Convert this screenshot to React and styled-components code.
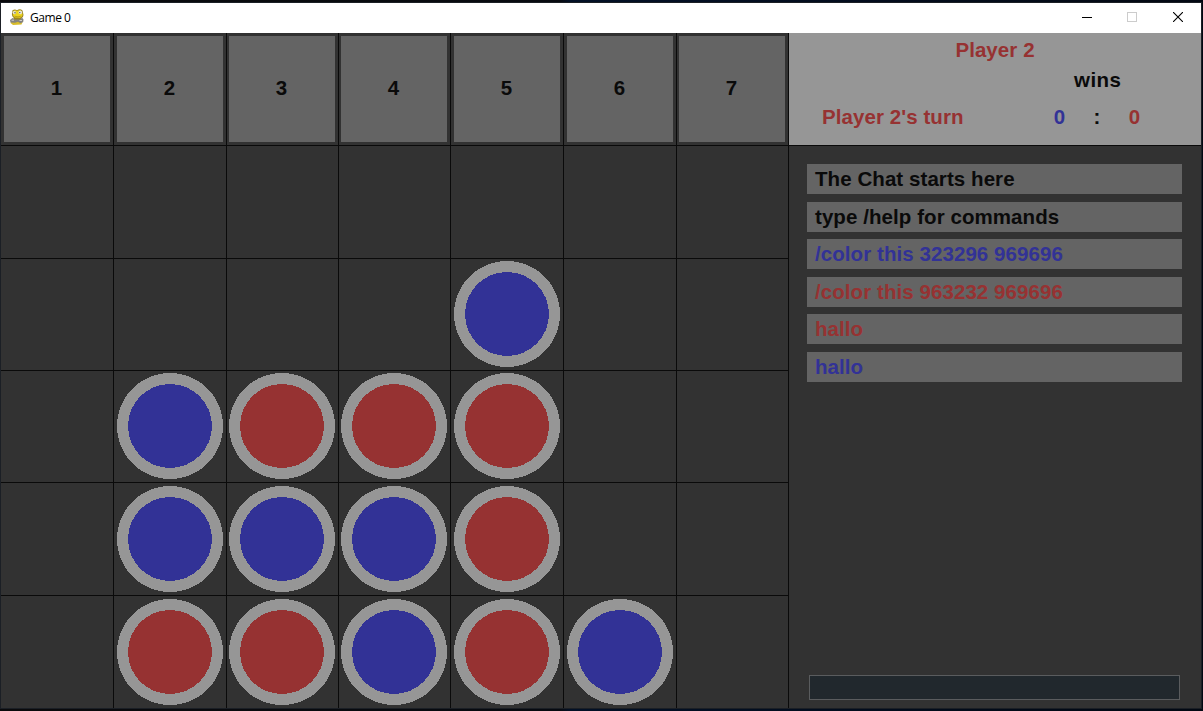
import React from "react";
import styled, { createGlobalStyle } from "styled-components";

const COLORS = {
  board: "#323232",
  line: "#0a0a0a",
  tile: "#646464",
  light: "#969696",
  blue: "#323296",
  red: "#963232",
  ink: "#0a0a0a",
};

const GlobalStyle = createGlobalStyle`
  * { box-sizing: border-box; }
  body { margin: 0; background: #020812; overflow: hidden; }
`;

const Desktop = styled.div`
  width: 1203px;
  height: 711px;
  padding: 2px 1px 2px 0;
  background: linear-gradient(90deg, #0a0a0c 0, #070a10 560px, #021026 570px, #020812 100%);
`;

const Window = styled.div`
  height: 707px;
  border: 1px solid #1b1f25;
  display: flex;
  flex-direction: column;
`;

const TitleBar = styled.header`
  height: 30px;
  flex: none;
  background: #fff;
  display: flex;
  align-items: center;
  padding: 0 0 2px 8px;
`;

const Title = styled.span`
  flex: 1;
  margin: 1px 0 0 5px;
  font: 12px/16px "Open Sans", "Noto Sans", sans-serif;
  letter-spacing: -0.45px;
  color: #000;
`;

const WindowButton = styled.button`
  width: ${(p) => p.$width || 46}px;
  height: 28px;
  padding: 0;
  border: 0;
  background: none;
  display: flex;
  align-items: center;
  justify-content: center;
`;

const Client = styled.main`
  flex: 1;
  display: flex;
  background: ${COLORS.board};
  color: ${COLORS.ink};
  font: bold 20.5px/30px "Liberation Sans", Arial, sans-serif;
  letter-spacing: 0.07px;
`;

const Board = styled.section`
  display: grid;
  grid-template-columns: 113px 113px 112px 112px 113px 113px 112px;
  grid-template-rows: 113px 113px 112px 112px 113px 112px;
`;

const Cell = styled.div`
  border-right: 1px solid ${COLORS.line};
  border-bottom: ${(p) => (p.$last ? 0 : 1)}px solid ${COLORS.line};
  padding: ${(p) => p.$top}px 0 0 ${(p) => p.$left}px;
`;

const ColumnButton = styled.button`
  display: flex;
  align-items: center;
  justify-content: center;
  width: 106px;
  height: 106px;
  padding: 0 1px 2px 0;
  border: 0;
  background: ${COLORS.tile};
  color: inherit;
  font: inherit;
`;

const Disc = styled.svg`
  display: block;
  width: 106px;
  height: 106px;
`;

const Sidebar = styled.aside`
  width: 412px;
  display: flex;
  flex-direction: column;
`;

const Status = styled.div`
  height: 113px;
  flex: none;
  background: ${COLORS.light};
  border-bottom: 1px solid ${COLORS.line};
  padding-top: 2px;
`;

const Winner = styled.div`
  height: 30px;
  text-align: center;
  color: ${COLORS.red};
`;

const WinsLabel = styled.div`
  height: 30px;
  padding-left: 285px;
  letter-spacing: 0.45px;
`;

const ScoreRow = styled.div`
  display: flex;
  margin-top: 7px;
  padding-left: 33px;
`;

const Turn = styled.div`
  width: 226px;
  color: ${COLORS.red};
`;

const Score = styled.div`
  width: ${(p) => p.$width}px;
  text-align: center;
  color: ${(p) => p.$color};
`;

const Chat = styled.div`
  flex: 1;
  padding: 18px 0 0 18px;
`;

const Message = styled.div`
  width: 375px;
  height: 30px;
  margin-bottom: ${(p) => p.$gap}px;
  padding-left: 8px;
  background: ${COLORS.tile};
  color: ${(p) => p.$color};
  white-space: pre;
`;

const ChatInput = styled.input`
  width: 371px;
  height: 25px;
  margin: 0 0 8px 20px;
  padding: 0 4px;
  border: 1px solid #5a5c5e;
  border-radius: 0;
  background: #21282d;
  color: ${COLORS.light};
  font: inherit;
  outline: none;
`;

const COL_INSET = [3, 3, 2, 2, 3, 3, 2];
const ROW_INSET = [3, 3, 2, 2, 3, 3];

const ROWS = [
  ".......",
  "....B..",
  ".BRRR..",
  ".BBBR..",
  ".RRBRB.",
];

const MESSAGES = [
  { text: "The Chat starts here", color: COLORS.ink, gap: 8 },
  { text: "type /help for commands", color: COLORS.ink, gap: 7 },
  { text: "/color this 323296 969696", color: COLORS.blue, gap: 8 },
  { text: "/color this 963232 969696", color: COLORS.red, gap: 7 },
  { text: "hallo", color: COLORS.red, gap: 8 },
  { text: "hallo", color: COLORS.blue, gap: 0 },
];

function Piece({ color }) {
  return (
    <Disc viewBox="0 0 106 106" shapeRendering="crispEdges">
      <circle cx="53" cy="53" r="53" fill={COLORS.light} />
      <circle cx="53" cy="53" r="42" fill={color} />
    </Disc>
  );
}

function SnakeIcon() {
  return (
    <svg width="16" height="16" viewBox="0 0 16 16">
      <path d="M3 11 L12 11 L13.500 13 L12.500 15.500 L4 16 L1.500 14Z" fill="#d9bd2a" />
      <path d="M3.500 1.200 Q6-.4 8 1.200 Q11-.6 13.500 1.500 L14.500 6 Q14.500 8.500 12 9.500 L12 12 L4.500 12 L4.500 8.500 Q2.500 7 3 4.500Z" fill="#9c8620" />
      <path d="M4.300 2 Q6 .6 8 2 Q11 .6 12.700 2.300 L13.600 6 Q13.300 8 11 8.800 L6 8.500 Q3.500 7 4 4.500Z" fill="#ecd41f" />
      <circle cx="5.400" cy="3.600" r="1.700" fill="#e6e6e0" />
      <circle cx="11.300" cy="3.400" r="1.800" fill="#e6e6e0" />
      <circle cx="6" cy="3.800" r=".7" fill="#5a5433" />
      <circle cx="10.800" cy="3.600" r=".7" fill="#5a5433" />
      <path d="M5.500 7.200 Q9 8.600 12.500 7" fill="none" stroke="#a98d16" strokeWidth=".7" />
      <path d="M1 11 L3.500 9 L6 10.500 L11 10.500 L13 8.500 L14.500 10.500 L14.200 13 L11.500 14.200 L9 12.800 L6 13.800 L1.500 13.500Z" fill="#858380" />
      <path d="M2.500 11.200 h2.500 M10.500 11.500 h2.500" stroke="#cfcdc8" />
    </svg>
  );
}

export default function App() {
  return (
    <>
      <GlobalStyle />
      <Desktop>
        <Window>
          <TitleBar>
            <SnakeIcon />
            <Title>Game 0</Title>
            <WindowButton $width={44} aria-label="Minimize">
              <svg width="10" height="10" shapeRendering="crispEdges">
                <path d="M0 5.500H10" stroke="#000" />
              </svg>
            </WindowButton>
            <WindowButton aria-label="Maximize">
              <svg width="10" height="10" shapeRendering="crispEdges">
                <rect x=".5" y=".5" width="9" height="9" fill="none" stroke="#ccc" />
              </svg>
            </WindowButton>
            <WindowButton aria-label="Close">
              <svg width="10" height="10">
                <path d="M0 0L10 10M10 0L0 10" stroke="#000" strokeWidth="1.100" />
              </svg>
            </WindowButton>
          </TitleBar>
          <Client>
            <Board>
              {COL_INSET.map((left, col) => (
                <Cell key={col} $top={ROW_INSET[0]} $left={left}>
                  <ColumnButton>{col + 1}</ColumnButton>
                </Cell>
              ))}
              {ROWS.map((row, r) =>
                [...row].map((piece, c) => (
                  <Cell
                    key={`${r}-${c}`}
                    $top={ROW_INSET[r + 1]}
                    $left={COL_INSET[c]}
                    $last={r === ROWS.length - 1}
                  >
                    {piece !== "." && <Piece color={piece === "B" ? COLORS.blue : COLORS.red} />}
                  </Cell>
                ))
              )}
            </Board>
            <Sidebar>
              <Status>
                <Winner>Player 2</Winner>
                <WinsLabel>wins</WinsLabel>
                <ScoreRow>
                  <Turn>Player 2's turn</Turn>
                  <Score $width={23} $color={COLORS.blue}>0</Score>
                  <Score $width={52} $color={COLORS.ink}>:</Score>
                  <Score $width={23} $color={COLORS.red}>0</Score>
                </ScoreRow>
              </Status>
              <Chat>
                {MESSAGES.map((m, i) => (
                  <Message key={i} $color={m.color} $gap={m.gap}>{m.text}</Message>
                ))}
              </Chat>
              <ChatInput aria-label="Chat message" />
            </Sidebar>
          </Client>
        </Window>
      </Desktop>
    </>
  );
}
